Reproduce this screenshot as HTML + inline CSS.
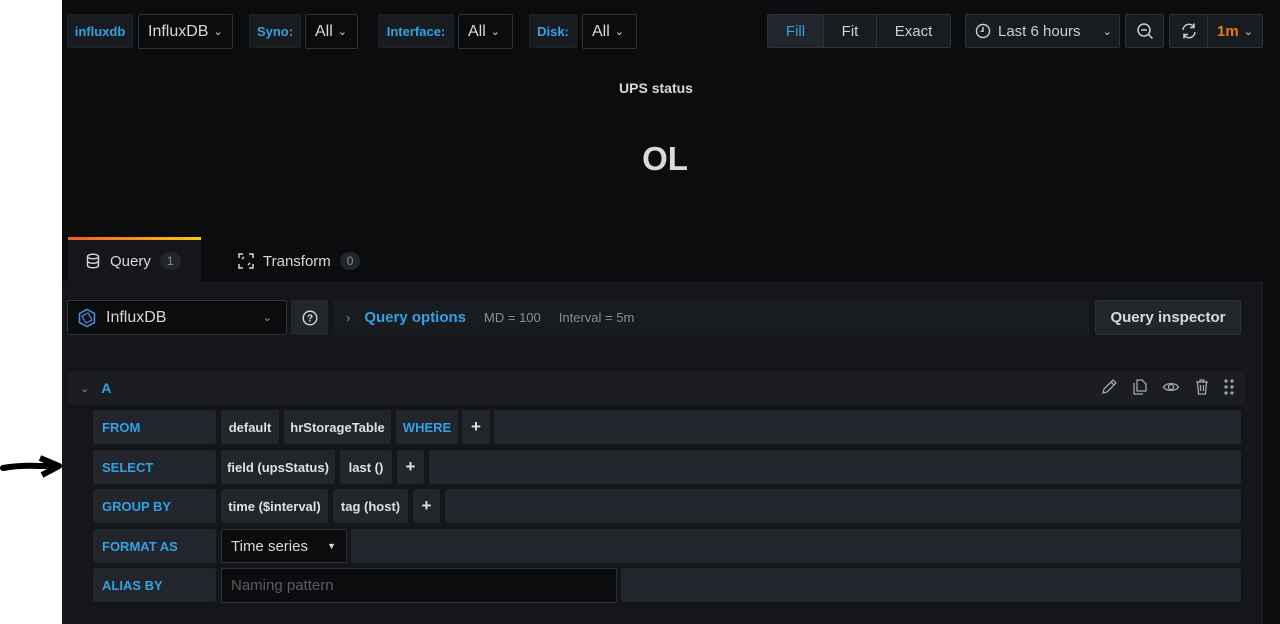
<!DOCTYPE html>
<html><head><meta charset="utf-8"><style>
*{box-sizing:border-box;margin:0;padding:0}
body{width:1280px;height:624px;background:#fff;font-family:"Liberation Sans",sans-serif;position:relative;overflow:hidden}
.a{position:absolute}
#main{left:62px;top:0;width:1218px;height:624px;background:#0b0c0e}
.lbl{background:#181b1f;border:1px solid #202226;border-radius:2px;color:#33a2e5;font-weight:bold;font-size:13px;display:flex;align-items:center;justify-content:center}
.sel{background:#0b0c0e;border:1px solid #2c3235;border-radius:2px;color:#d8d9da;font-size:16px;display:flex;align-items:center;padding-left:9px}
.btn{background:#181b1f;border:1px solid #2c3235;color:#c7d0d9;font-size:15px;display:flex;align-items:center;justify-content:center}
.chip{position:absolute;background:#22252b;border-radius:2px;color:#e0e0e0;font-weight:bold;font-size:13px;display:flex;align-items:center;justify-content:center;height:34px}
.rl{position:absolute;left:93px;width:123px;height:34px;background:#22252b;border-radius:2px;color:#33a2e5;font-weight:bold;font-size:13px;display:flex;align-items:center;padding-left:9px}
.fill{position:absolute;background:#22252b;border-radius:2px;height:34px;right:39px}
svg{display:block}
</style></head><body>
<div class="a" style="left:0;top:453px;width:62px;height:26px">
<svg width="62" height="26"><path d="M3 15 Q20 12 40 13 L58 13" stroke="#000" stroke-width="6" fill="none" stroke-linecap="round"/><path d="M40 5 L59 13 L42 22" stroke="#000" stroke-width="6" fill="none" stroke-linejoin="round"/></svg></div>
<div id="main" class="a"></div>

<div class="a lbl" style="left:67px;top:14px;width:66px;height:34px">influxdb</div>
<div class="a sel" style="left:138px;top:14px;width:95px;height:35px">InfluxDB <span style="font-size:11px;margin-left:5px">&#8964;</span></div>
<div class="a lbl" style="left:249px;top:14px;width:52px;height:34px">Syno:</div>
<div class="a sel" style="left:305px;top:14px;width:53px;height:35px">All <span style="font-size:11px;margin-left:5px">&#8964;</span></div>
<div class="a lbl" style="left:378px;top:14px;width:76px;height:34px">Interface:</div>
<div class="a sel" style="left:458px;top:14px;width:55px;height:35px">All <span style="font-size:11px;margin-left:5px">&#8964;</span></div>
<div class="a lbl" style="left:529px;top:14px;width:48px;height:34px">Disk:</div>
<div class="a sel" style="left:582px;top:14px;width:55px;height:35px">All <span style="font-size:11px;margin-left:5px">&#8964;</span></div>

<div class="a btn" style="left:767px;top:14px;width:57px;height:34px;color:#33a2e5;background:#22252b;border-radius:2px 0 0 2px">Fill</div>
<div class="a btn" style="left:823px;top:14px;width:54px;height:34px">Fit</div>
<div class="a btn" style="left:876px;top:14px;width:75px;height:34px;border-radius:0 2px 2px 0">Exact</div>
<div class="a btn" style="left:965px;top:14px;width:155px;height:34px;justify-content:flex-start;padding-left:9px;border-radius:2px">
<svg width="16" height="16" viewBox="0 0 16 16"><circle cx="8" cy="8" r="6.5" stroke="#c7d0d9" stroke-width="1.4" fill="none"/><path d="M8 4v4.3H5.5" stroke="#c7d0d9" stroke-width="1.4" fill="none"/></svg>
<span style="margin-left:7px">Last 6 hours</span><span style="font-size:11px;margin-left:22px">&#8964;</span></div>
<div class="a btn" style="left:1125px;top:14px;width:39px;height:34px;border-radius:2px">
<svg width="18" height="18" viewBox="0 0 18 18"><circle cx="8" cy="8" r="6" stroke="#c7d0d9" stroke-width="1.5" fill="none"/><path d="M5 8h6M12.5 12.5l4 4" stroke="#c7d0d9" stroke-width="1.5"/></svg></div>
<div class="a btn" style="left:1169px;top:14px;width:39px;height:34px;border-radius:2px 0 0 2px">
<svg width="18" height="18" viewBox="0 0 18 18"><path d="M3 8a6 6 0 0 1 11-3M15 10a6 6 0 0 1-11 3" stroke="#c7d0d9" stroke-width="1.5" fill="none"/><path d="M14 1.5v4h-4M4 16.5v-4h4" stroke="#c7d0d9" stroke-width="1.5" fill="none"/></svg></div>
<div class="a btn" style="left:1207px;top:14px;width:56px;height:34px;color:#eb7b18;font-weight:bold;border-radius:0 2px 2px 0">1m <span style="font-size:11px;margin-left:5px;color:#c7d0d9;font-weight:normal">&#8964;</span></div>

<div class="a" style="left:62px;width:1188px;top:80px;text-align:center;color:#d8d9da;font-weight:bold;font-size:14px">UPS status</div>
<div class="a" style="left:62px;width:1206px;top:140px;text-align:center;color:#d8d9da;font-size:33px;font-weight:bold">OL</div>

<div class="a" style="left:68px;top:237px;width:133px;height:45px;background:#141619;border-top:3px solid;border-image:linear-gradient(90deg,#f05a28,#fbca0a) 1"></div>
<div class="a" style="left:86px;top:252px;color:#d8d9da;font-size:15px;display:flex;align-items:center">
<svg width="14" height="16" viewBox="0 0 14 16"><ellipse cx="7" cy="3.5" rx="5.5" ry="2.3" stroke="#d8d9da" stroke-width="1.4" fill="none"/><path d="M1.5 3.5v9c0 1.3 2.5 2.3 5.5 2.3s5.5-1 5.5-2.3v-9M1.5 8c0 1.3 2.5 2.3 5.5 2.3s5.5-1 5.5-2.3" stroke="#d8d9da" stroke-width="1.4" fill="none"/></svg>
<span style="margin-left:10px">Query</span><span style="margin-left:9px;background:#22252b;border-radius:10px;font-size:12px;color:#8e8e8e;padding:2px 7px">1</span></div>
<div class="a" style="left:238px;top:252px;color:#d8d9da;font-size:15px;display:flex;align-items:center">
<svg width="16" height="16" viewBox="0 0 16 16" fill="none" stroke="#d8d9da" stroke-width="1.5"><path d="M1 5V1h4M11 1h4v4M15 11v4h-4M5 15H1v-4M4 6l2-2M12 10l-2 2"/></svg>
<span style="margin-left:9px">Transform</span><span style="margin-left:9px;background:#22252b;border-radius:10px;font-size:12px;color:#8e8e8e;padding:2px 7px">0</span></div>

<div class="a" style="left:62px;top:281px;width:1201px;height:343px;background:#141619;border-right:1px solid #1c1e22"></div>

<div class="a sel" style="left:67px;top:300px;width:220px;height:35px;padding-left:9px">
<svg width="20" height="20" viewBox="0 0 20 20"><path d="M10 1.5l7.5 4v9L10 18.5 2.5 14.5v-9z" stroke="#4f8fea" stroke-width="1.5" fill="none"/><path d="M5 8l6-3 4 7-6 3z" stroke="#4f8fea" stroke-width="1.2" fill="none"/></svg>
<span style="margin-left:9px">InfluxDB</span><span style="position:absolute;right:14px;font-size:11px;color:#9fa7b3">&#8964;</span></div>
<div class="a btn" style="left:291px;top:300px;width:37px;height:35px;background:#22252b;border-color:#22252b">
<svg width="16" height="16" viewBox="0 0 16 16"><circle cx="8" cy="8" r="6.8" stroke="#d8d9da" stroke-width="1.4" fill="none"/><text x="8" y="11.5" font-size="10" fill="#d8d9da" text-anchor="middle" font-family="Liberation Sans" font-weight="bold">?</text></svg></div>
<div class="a" style="left:333px;top:300px;width:757px;height:35px;background:#181b1f;display:flex;align-items:center;padding-left:13px">
<span style="color:#8e8e8e;font-size:13px">&#8250;</span>
<span style="color:#33a2e5;font-weight:bold;font-size:15px;margin-left:14px">Query options</span>
<span style="color:#8e8e8e;font-size:13px;margin-left:18px">MD = 100</span>
<span style="color:#8e8e8e;font-size:13px;margin-left:18px">Interval = 5m</span></div>
<div class="a btn" style="left:1095px;top:300px;width:146px;height:35px;background:#22252b;border-color:#2c3235;color:#d8d9da;font-weight:bold;border-radius:2px">Query inspector</div>

<div class="a" style="left:68px;top:371px;width:1177px;height:34px;background:#1b1d22;display:flex;align-items:center;padding-left:12px">
<span style="color:#8e8e8e;font-size:11px">&#8964;</span><span style="color:#33a2e5;font-weight:bold;font-size:14px;margin-left:12px">A</span></div>
<div class="a" style="left:1100px;top:378px;display:flex;gap:13px;align-items:center">
<svg width="18" height="18" viewBox="0 0 18 18" fill="none" stroke="#9fa7b3" stroke-width="1.3"><path d="M3 15l1-4L13 2l3 3-9 9z M11 4l3 3"/></svg>
<svg width="18" height="18" viewBox="0 0 18 18" fill="none" stroke="#9fa7b3" stroke-width="1.3"><path d="M6 2h5l4 4v7H6z M3 5v11h9"/></svg>
<svg width="18" height="18" viewBox="0 0 18 18" fill="none" stroke="#9fa7b3" stroke-width="1.3"><path d="M1.5 9C4 4.5 14 4.5 16.5 9 14 13.5 4 13.5 1.5 9z"/><circle cx="9" cy="9" r="2.5"/></svg>
<svg width="18" height="18" viewBox="0 0 18 18" fill="none" stroke="#9fa7b3" stroke-width="1.3"><path d="M3 4h12M7 4V2h4v2M4.5 4l1 12h7l1-12M7.5 7v6M10.5 7v6"/></svg>
<svg width="10" height="18" viewBox="0 0 10 18" fill="#9fa7b3"><circle cx="2" cy="3" r="1.6"/><circle cx="8" cy="3" r="1.6"/><circle cx="2" cy="9" r="1.6"/><circle cx="8" cy="9" r="1.6"/><circle cx="2" cy="15" r="1.6"/><circle cx="8" cy="15" r="1.6"/></svg></div>

<div class="rl" style="top:410px">FROM</div>
<div class="chip" style="left:221px;top:410px;width:58px">default</div>
<div class="chip" style="left:284px;top:410px;width:107px">hrStorageTable</div>
<div class="chip" style="left:396px;top:410px;width:62px;color:#33a2e5">WHERE</div>
<div class="chip" style="left:462px;top:410px;width:28px;font-size:17px">+</div>
<div class="fill" style="left:494px;top:410px"></div>

<div class="rl" style="top:450px">SELECT</div>
<div class="chip" style="left:221px;top:450px;width:114px">field (upsStatus)</div>
<div class="chip" style="left:340px;top:450px;width:52px">last ()</div>
<div class="chip" style="left:397px;top:450px;width:27px;font-size:17px">+</div>
<div class="fill" style="left:429px;top:450px"></div>

<div class="rl" style="top:489px">GROUP BY</div>
<div class="chip" style="left:221px;top:489px;width:107px">time ($interval)</div>
<div class="chip" style="left:333px;top:489px;width:75px">tag (host)</div>
<div class="chip" style="left:413px;top:489px;width:27px;font-size:17px">+</div>
<div class="fill" style="left:445px;top:489px"></div>

<div class="rl" style="top:529px">FORMAT AS</div>
<div class="a sel" style="left:221px;top:529px;width:126px;height:34px;font-size:15px">Time series<span style="position:absolute;right:10px;font-size:9px">&#9660;</span></div>
<div class="fill" style="left:351px;top:529px"></div>

<div class="rl" style="top:568px">ALIAS BY</div>
<div class="a sel" style="left:221px;top:568px;width:396px;height:35px;color:#5a5d63;font-size:15px">Naming pattern</div>
<div class="fill" style="left:621px;top:568px"></div>
</body></html>
